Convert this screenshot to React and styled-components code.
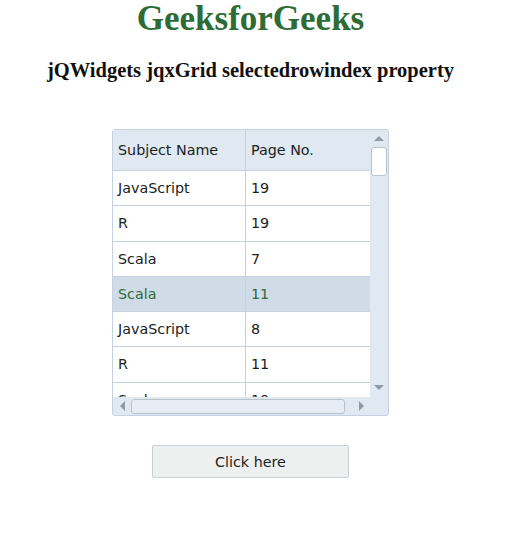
import styled, { createGlobalStyle } from 'styled-components'

const GlobalStyle = createGlobalStyle`
  body {
    margin: 0;
    background: #ffffff;
    font-family: 'Liberation Serif', serif;
  }
`

const rows = [
  { name: 'JavaScript', page: '19' },
  { name: 'R', page: '19' },
  { name: 'Scala', page: '7' },
  { name: 'Scala', page: '11', selected: true },
  { name: 'JavaScript', page: '8' },
  { name: 'R', page: '11' },
  { name: 'Scala', page: '10' },
]

function Arrow({ dir }) {
  const pts = {
    up: '0,5 5,0 10,5',
    down: '0,0 10,0 5,5',
    left: '5,0 5,10 0,5',
    right: '0,0 0,10 5,5',
  }[dir]
  const vertical = dir === 'up' || dir === 'down'
  return (
    <svg width={vertical ? 10 : 5} height={vertical ? 5 : 10} viewBox={vertical ? '0 0 10 5' : '0 0 5 10'}>
      <polygon points={pts} fill="#8d9ba8" />
    </svg>
  )
}

export default function App() {
  return (
    <>
      <GlobalStyle />
      <Page>
        <Title>GeeksforGeeks</Title>
        <Subtitle>jQWidgets jqxGrid selectedrowindex property</Subtitle>
        <Grid>
          <Content>
            <HeaderRow>
              <HeaderCell>Subject Name</HeaderCell>
              <HeaderCell>Page No.</HeaderCell>
            </HeaderRow>
            {rows.map((r, i) => (
              <Row key={i} $selected={r.selected}>
                <Cell>{r.name}</Cell>
                <Cell>{r.page}</Cell>
              </Row>
            ))}
          </Content>
          <VScroll>
            <Arrow dir="up" />
            <VThumb />
            <Spacer />
            <Arrow dir="down" />
          </VScroll>
          <HScroll>
            <Arrow dir="left" />
            <HThumb />
            <Arrow dir="right" />
          </HScroll>
          <Corner />
        </Grid>
        <Button>Click here</Button>
      </Page>
    </>
  )
}

const Page = styled.div`
  width: 501px;
  display: flex;
  flex-direction: column;
  align-items: center;
`

const Title = styled.h1`
  margin: 0;
  padding-top: 1px;
  font-size: 35px;
  line-height: 36px;
  font-weight: bold;
  color: #2e6c35;
`

const Subtitle = styled.h3`
  margin: 21px 0 0;
  font-size: 20.5px;
  line-height: 24px;
  font-weight: bold;
  color: #111;
`

const Grid = styled.div`
  margin-top: 47px;
  width: 275px;
  height: 285px;
  border: 1px solid #c3d1e0;
  border-radius: 3px;
  overflow: hidden;
  display: grid;
  grid-template-columns: 1fr 18px;
  grid-template-rows: 1fr 18px;
  background: #e0e8f2;
  font-family: 'DejaVu Sans', Verdana, sans-serif;
  font-size: 14.3px;
`

const Content = styled.div`
  overflow: hidden;
  background: #ffffff;
`

const HeaderRow = styled.div`
  display: grid;
  grid-template-columns: 132px 1fr;
  height: 40px;
  background: #e0e8f2;
  border-bottom: 1px solid #c3d1e0;
`

const HeaderCell = styled.div`
  display: flex;
  align-items: center;
  padding-left: 5px;
  color: #1a231c;
  & + & {
    border-left: 1px solid #c3d1e0;
  }
`

const Row = styled.div`
  display: grid;
  grid-template-columns: 132px 1fr;
  height: 34.25px;
  border-bottom: 1px solid #c3d1e0;
  background: ${p => (p.$selected ? '#cfdbe7' : '#ffffff')};
  color: ${p => (p.$selected ? '#2f6b38' : '#1a231c')};
`

const Cell = styled.div`
  display: flex;
  align-items: center;
  padding-left: 5px;
  & + & {
    border-left: 1px solid #c3d1e0;
  }
`

const VScroll = styled.div`
  display: flex;
  flex-direction: column;
  align-items: center;
  padding: 6px 0 7px;
  gap: 6px;
`

const VThumb = styled.div`
  width: 14px;
  height: 27px;
  background: #ffffff;
  border: 1px solid #b9c3cc;
  border-radius: 3px;
`

const Spacer = styled.div`
  flex: 1;
`

const HScroll = styled.div`
  display: flex;
  align-items: center;
  padding: 0 6px 0 7px;
  gap: 6px;
`

const HThumb = styled.div`
  width: 212px;
  height: 13px;
  background: #e6edf5;
  border: 1px solid #b9c3cc;
  border-radius: 3px;
  margin-right: auto;
`

const Corner = styled.div`
  background: #e0e8f2;
`

const Button = styled.button`
  margin-top: 29px;
  width: 197px;
  height: 33px;
  background: #eeefef;
  border: 1px solid #c7d0d8;
  border-radius: 2px;
  font-family: 'DejaVu Sans', Verdana, sans-serif;
  font-size: 14.3px;
  color: #1a231c;
  cursor: pointer;
`
